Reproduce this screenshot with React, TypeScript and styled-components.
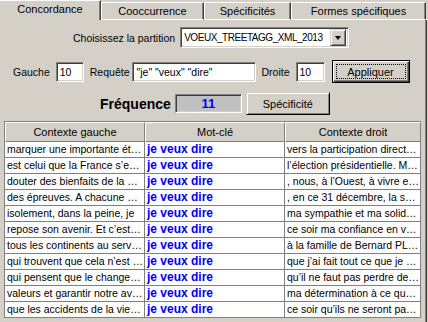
import styled, { createGlobalStyle } from 'styled-components';

const GlobalStyle = createGlobalStyle`
    html, body {
        margin: 0;
        padding: 0;
        background: #d4d0c8;
    }
    body {
        font-family: "Liberation Sans", Arial, sans-serif;
        font-size: 11px;
        color: #000;
    }
`;

const Window = styled.div`
    width: 428px;
    height: 322px;
    overflow: hidden;
    background: #d4d0c8;
    display: flex;
    flex-direction: column;
`;

const TabBar = styled.div`
    display: flex;
    align-items: flex-end;
    height: 20px;
    flex-shrink: 0;
`;

const Tab = styled.div<{ $active?: boolean; $width: number }>`
    box-sizing: border-box;
    width: ${p => p.$width}px;
    height: ${p => (p.$active ? 20 : 18)}px;
    display: flex;
    align-items: center;
    justify-content: center;
    padding-bottom: ${p => (p.$active ? 3 : 0)}px;
    font-size: 11px;
    background: #d4d0c8;
    border-top: 1px solid #fff;
    border-left: ${p => (p.$active ? 'none' : '1px solid #fff')};
    border-right: 1px solid #404040;
    box-shadow: inset -1px 0 0 #808080;
    border-bottom: ${p => (p.$active ? 'none' : '1px solid #fff')};
`;

const TabFiller = styled.div`
    flex: 1;
    height: 1px;
    background: #fff;
`;

const Panel = styled.div`
    flex: 1;
    display: flex;
    flex-direction: column;
    border-right: 1px solid #404040;
    box-shadow: inset -1px 0 0 #808080;
    margin-right: 1px;
    padding-top: 7px;
`;

const Row = styled.div<{ $left: number; $height: number; $mt?: number }>`
    display: flex;
    align-items: center;
    height: ${p => p.$height}px;
    padding-left: ${p => p.$left}px;
    margin-top: ${p => p.$mt ?? 0}px;
    flex-shrink: 0;
`;

const Label = styled.span<{ $ml?: number }>`
    font-size: 10.5px;
    margin-left: ${p => p.$ml ?? 0}px;
    white-space: nowrap;
`;

const Sunken = styled.div<{ $width: number; $height?: number; $ml?: number; $bg?: string }>`
    box-sizing: border-box;
    width: ${p => p.$width}px;
    height: ${p => p.$height ?? 20}px;
    margin-left: ${p => p.$ml ?? 0}px;
    background: ${p => p.$bg ?? '#fff'};
    border-top: 1px solid #808080;
    border-left: 1px solid #808080;
    border-right: 1px solid #fff;
    border-bottom: 1px solid #fff;
    box-shadow: inset 1px 1px 0 #404040, inset -1px -1px 0 #d4d0c8;
    display: flex;
    align-items: center;
    padding-left: 3px;
    font-size: 10.5px;
    white-space: nowrap;
    overflow: hidden;
    flex-shrink: 0;
`;

const Combo = styled(Sunken)`
    padding-right: 2px;
`;

const ComboText = styled.span`
    flex: 1;
    min-width: 0;
    overflow: hidden;
    font-size: 10px;
    letter-spacing: -0.45px;
`;

const DropButton = styled.div`
    box-sizing: border-box;
    width: 16px;
    height: 17px;
    flex-shrink: 0;
    background: #d4d0c8;
    border-top: 1px solid #d4d0c8;
    border-left: 1px solid #d4d0c8;
    border-right: 1px solid #404040;
    border-bottom: 1px solid #404040;
    box-shadow: inset 1px 1px 0 #fff, inset -1px -1px 0 #808080;
    display: flex;
    align-items: center;
    justify-content: center;
`;

const Arrow = styled.div`
    width: 0;
    height: 0;
    border-left: 3.5px solid transparent;
    border-right: 3.5px solid transparent;
    border-top: 4px solid #000;
`;

const Button = styled.div<{ $width: number; $default?: boolean; $ml?: number }>`
    box-sizing: border-box;
    width: ${p => p.$width}px;
    height: 23px;
    margin-left: ${p => p.$ml ?? 0}px;
    background: #d4d0c8;
    border: 1px solid ${p => (p.$default ? '#000' : '#d4d0c8')};
    border-right-color: #000;
    border-bottom-color: #000;
    box-shadow: ${p =>
        p.$default
            ? 'inset 1px 1px 0 #fff, inset -1px -1px 0 #404040, inset -2px -2px 0 #808080'
            : 'inset 1px 1px 0 #fff, inset -1px -1px 0 #808080'};
    display: flex;
    align-items: center;
    justify-content: center;
    font-size: 11px;
    padding: 3px;
    flex-shrink: 0;
`;

const Focus = styled.div`
    width: 100%;
    height: 100%;
    box-sizing: border-box;
    border: 1px dotted #000;
    display: flex;
    align-items: center;
    justify-content: center;
`;

const FreqLabel = styled.span`
    font-size: 14px;
    font-weight: bold;
    color: #000;
`;

const FreqValue = styled(Sunken)`
    justify-content: center;
    color: #0000ff;
    font-weight: bold;
    font-size: 13px;
    padding-left: 0;
`;

const Table = styled.div`
    margin: 6px 0 0 4px;
    width: 416px;
    display: grid;
    grid-template-columns: 140px 140px 136px;
    grid-auto-rows: 16px;
    grid-template-rows: 20px;
    border-left: 1px solid #808080;
    border-top: 1px solid #808080;
`;

const HeadCell = styled.div`
    box-sizing: border-box;
    background: #d4d0c8;
    border-top: 1px solid #fff;
    border-left: 1px solid #fff;
    border-right: 1px solid #808080;
    border-bottom: 1px solid #808080;
    display: flex;
    align-items: center;
    justify-content: center;
    font-size: 11px;
`;

const Cell = styled.div<{ $key?: boolean }>`
    box-sizing: border-box;
    background: #fff;
    border-right: 1px solid #808080;
    border-bottom: 1px solid #808080;
    padding: 0 1px 0 2px;
    line-height: 15px;
    font-size: ${p => (p.$key ? 12 : 10.5)}px;
    font-weight: ${p => (p.$key ? 'bold' : 'normal')};
    color: ${p => (p.$key ? '#0000ff' : '#000')};
    white-space: nowrap;
    overflow: hidden;
    text-overflow: ellipsis;
`;

const rows: [string, string][] = [
    ['marquer une importante étape', 'vers la participation directe des citoyens'],
    ['est celui que la France s’engage', 'l’élection présidentielle. Mes chers compatriotes'],
    ['douter des bienfaits de la paix', ', nous, à l’Ouest, à vivre ensemble'],
    ['des épreuves. A chacune de ces', ', en ce 31 décembre, la solidarité'],
    ['isolement, dans la peine, je', 'ma sympathie et ma solidarité'],
    ['repose son avenir. Et c’est pourquoi', 'ce soir ma confiance en vous'],
    ['tous les continents au service', 'à la famille de Bernard PLANCHE'],
    ['qui trouvent que cela n’est pas', 'que j’ai fait tout ce que je pouvais'],
    ['qui pensent que le changement', 'qu’il ne faut pas perdre de vue'],
    ['valeurs et garantir notre avenir', 'ma détermination à ce que la France'],
    ['que les accidents de la vie ne', 'ce soir qu’ils ne seront pas seuls'],
];

const tabs = [
    { label: 'Concordance', width: 101 },
    { label: 'Cooccurrence', width: 103 },
    { label: 'Spécificités', width: 87 },
    { label: 'Formes spécifiques', width: 135 },
];

const App = () => {
    return (
        <Window>
            <GlobalStyle />
            <TabBar>
                {tabs.map((t, i) => (
                    <Tab key={t.label} $active={i === 0} $width={t.width}>
                        {t.label}
                    </Tab>
                ))}
                <TabFiller />
            </TabBar>
            <Panel>
                <Row $left={73} $height={21}>
                    <Label>Choisissez la partition</Label>
                    <Combo $width={169} $height={21} $ml={5}>
                        <ComboText>VOEUX_TREETAGG_XML_2013</ComboText>
                        <DropButton>
                            <Arrow />
                        </DropButton>
                    </Combo>
                </Row>
                <Row $left={13} $height={23} $mt={12}>
                    <Label>Gauche</Label>
                    <Sunken $width={28} $ml={6}>10</Sunken>
                    <Label $ml={6}>Requête</Label>
                    <Sunken $width={124} $ml={3}>"je" "veux" "dire"</Sunken>
                    <Label $ml={5}>Droite</Label>
                    <Sunken $width={29} $ml={6}>10</Sunken>
                    <Button $width={78} $ml={7} $default>
                        <Focus>Appliquer</Focus>
                    </Button>
                </Row>
                <Row $left={100} $height={23} $mt={9}>
                    <FreqLabel>Fréquence</FreqLabel>
                    <FreqValue $width={67} $height={19} $ml={4} $bg="#c0c0c0">11</FreqValue>
                    <Button $width={84} $ml={4}>Spécificité</Button>
                </Row>
                <Table>
                    <HeadCell>Contexte gauche</HeadCell>
                    <HeadCell>Mot-clé</HeadCell>
                    <HeadCell>Contexte droit</HeadCell>
                    {rows.map(([left, right], i) => [
                        <Cell key={`l${i}`}>{left}</Cell>,
                        <Cell key={`k${i}`} $key>je veux dire</Cell>,
                        <Cell key={`r${i}`}>{right}</Cell>,
                    ])}
                </Table>
            </Panel>
        </Window>
    );
};

export default App;
